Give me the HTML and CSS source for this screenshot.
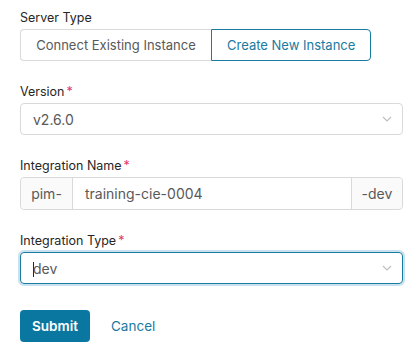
FILE: index.html
```html
<!DOCTYPE html>
<html>
<head>
<meta charset="utf-8">
<link rel="stylesheet" href="styles.css">
</head>
<body>
<form class="form">
  <div class="field">
    <div class="label">Server Type</div>
    <div class="segmented">
      <button type="button" class="seg">Connect Existing Instance</button>
      <button type="button" class="seg seg-active">Create New Instance</button>
    </div>
  </div>
  <div class="field">
    <div class="label">Version<span class="req">*</span></div>
    <div class="select">
      <span class="select-value">v2.6.0</span>
      <svg class="chev" width="10" height="6" viewBox="0 0 10 6"><path d="M1 1l4 4 4-4" fill="none" stroke="#bfbfbf" stroke-width="1.2"/></svg>
    </div>
  </div>
  <div class="field">
    <div class="label">Integration Name<span class="req">*</span></div>
    <div class="group">
      <span class="addon addon-left">pim-</span>
      <span class="group-input">training-cie-0004</span>
      <span class="addon addon-right">-dev</span>
    </div>
  </div>
  <div class="field">
    <div class="label">Integration Type<span class="req">*</span></div>
    <div class="select select-focus">
      <span class="select-value"><span class="caret"></span>dev</span>
      <svg class="chev" width="10" height="6" viewBox="0 0 10 6"><path d="M1 1l4 4 4-4" fill="none" stroke="#bfbfbf" stroke-width="1.2"/></svg>
    </div>
  </div>
  <div class="actions">
    <button type="button" class="btn-primary">Submit</button>
    <button type="button" class="btn-link">Cancel</button>
  </div>
</form>
</body>
</html>
```
FILE: styles.css
```css
* { box-sizing: border-box; }
html, body { margin: 0; padding: 0; background: #fff; }
body {
  font-family: Inter, "Noto Sans", sans-serif;
  color: #262626;
  width: 417px;
  height: 360px;
  overflow: hidden;
}
.form {
  padding: 8px 14px 0 20px;
  display: flex;
  flex-direction: column;
  gap: 21px;
}
.field { display: flex; flex-direction: column; gap: 1px; }
.label {
  font-size: 12.5px;
  line-height: 20px;
  color: #262626;
}
.req { color: #e8336b; margin-left: 2px; }
.segmented { display: flex; height: 32px; }
.seg {
  font-family: inherit;
  font-size: 13px;
  color: #595959;
  background: #fff;
  border: 1px solid #d9d9d9;
  padding: 0 15px;
  height: 32px;
  margin: 0;
  cursor: pointer;
  white-space: nowrap;
}
.seg:first-child { border-radius: 4px 0 0 4px; border-right: none; width: 191px; }
.seg-active {
  border-color: #1a7aa0;
  color: #1a7aa0;
  border-radius: 0 4px 4px 0;
  width: 160px;
}
.select {
  height: 32px;
  width: 383px;
  border: 1px solid #d9d9d9;
  border-radius: 4px;
  display: flex;
  align-items: center;
  justify-content: space-between;
  padding: 0 10px 0 12px;
  font-size: 14px;
  color: #595959;
}
.select-focus {
  border-color: #1a7aa0;
  box-shadow: 0 0 0 2px #c9e3ee;
}
.caret {
  display: inline-block;
  width: 1px;
  height: 15px;
  background: #262626;
  vertical-align: -3px;
  margin-right: -1px;
}
.group {
  display: flex;
  height: 33px;
  width: 383px;
  border: 1px solid #d9d9d9;
  border-radius: 4px;
  font-size: 14px;
  color: #595959;
}
.addon {
  background: #fafafa;
  display: flex;
  align-items: center;
  justify-content: center;
  flex-shrink: 0;
  white-space: nowrap;
}
.addon-left { border-right: 1px solid #d9d9d9; border-radius: 4px 0 0 4px; width: 52px; }
.addon-right { border-left: 1px solid #d9d9d9; border-radius: 0 4px 4px 0; width: 51px; }
.group-input {
  flex: 1;
  display: flex;
  align-items: center;
  padding: 0 12px;
  white-space: nowrap;
}
.actions {
  display: flex;
  align-items: center;
  gap: 8px;
  margin-top: 5px;
}
.btn-primary {
  font-family: inherit;
  font-weight: 600;
  font-size: 13.5px;
  color: #fff;
  background: #0a77a0;
  border: none;
  border-radius: 4px;
  height: 32px;
  width: 70px;
  padding: 0;
}
.btn-link {
  font-family: inherit;
  font-size: 13.5px;
  color: #1a7aa0;
  background: none;
  border: none;
  padding: 0 13px;
  height: 32px;
}
```
